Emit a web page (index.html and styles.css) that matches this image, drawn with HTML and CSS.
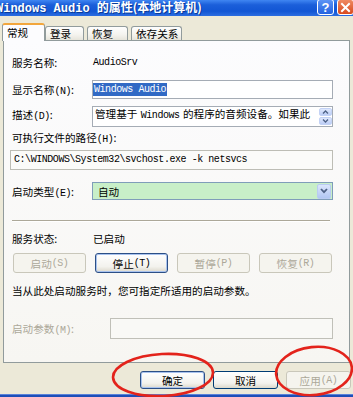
FILE: index.html
```html
<!DOCTYPE html>
<html>
<head>
<meta charset="utf-8">
<link rel="stylesheet" href="styles.css">
</head>
<body>
<div class="win">
  <div class="titlebar">
    <span class="title"><span class="tm">Windows Audio </span>的属性(本地计算机)</span>
    <div class="tbtns">
      <span class="tb help">?</span>
      <span class="tb close"><svg width="11" height="11" viewBox="0 0 11 11"><path d="M2 2 L9 9 M9 2 L2 9" stroke="#fff" stroke-width="2" stroke-linecap="square"/></svg></span>
    </div>
  </div>
  <div class="tabs">
    <div class="tab active">常规</div>
    <div class="tab t2">登录</div>
    <div class="tab t3">恢复</div>
    <div class="tab t4">依存关系</div>
  </div>
  <div class="panel">
    <div class="row r1"><span class="lbl">服务名称:</span><span class="val m">AudioSrv</span></div>
    <div class="row r2"><span class="lbl">显示名称<span class="m">(N)</span>:</span><div class="input"><span class="sel m">Windows Audio</span></div></div>
    <div class="row r3"><span class="lbl">描述<span class="m">(D)</span>:</span><div class="textarea"><span class="ta-text">管理基于 <span class="m">Windows</span> 的程序的音频设备。如果此</span><div class="vscroll"><span class="sb"><svg width="7" height="4" viewBox="0 0 7 4"><path d="M1 3.5 L3.5 1 L6 3.5" fill="none" stroke="#4d6185" stroke-width="1.3"/></svg></span><span class="sb"><svg width="7" height="4" viewBox="0 0 7 4"><path d="M1 0.5 L3.5 3 L6 0.5" fill="none" stroke="#4d6185" stroke-width="1.3"/></svg></span></div></div></div>
    <div class="r4">可执行文件的路径<span class="m">(H)</span>:</div>
    <div class="path m">C:\WINDOWS\System32\svchost.exe -k netsvcs</div>
    <div class="row r5"><span class="lbl">启动类型<span class="m">(E)</span>:</span><div class="select"><span class="selv">自动</span><span class="arrow"><svg width="8" height="6" viewBox="0 0 8 6"><path d="M1 1 L4 4.2 L7 1" fill="none" stroke="#4d6185" stroke-width="1.8"/></svg></span></div></div>
    <div class="sep"></div>
    <div class="row r6"><span class="lbl">服务状态:</span><span class="val">已启动</span></div>
    <div class="btnrow">
      <span class="btn dis">启动<span class="m">(S)</span></span>
      <span class="btn focus">停止<span class="m">(T)</span></span>
      <span class="btn dis">暂停<span class="m">(P)</span></span>
      <span class="btn dis">恢复<span class="m">(R)</span></span>
    </div>
    <div class="note">当从此处启动服务时，您可指定所适用的启动参数。</div>
    <div class="row r7"><span class="lbl7 dtext">启动参数<span class="m">(M)</span>:</span><div class="input param"></div></div>
  </div>
  <div class="footer">
    <span class="btn fbtn focus">确定</span>
    <span class="btn fbtn">取消</span>
    <span class="btn fbtn dis">应用<span class="m">(A)</span></span>
  </div>
  <div class="strip"></div>
  <svg class="marks" width="353" height="397" viewBox="0 0 353 397">
    <ellipse cx="163" cy="375" rx="50" ry="21" transform="rotate(-3 163 375)" fill="none" stroke="#e3231b" stroke-width="2.6"/>
    <ellipse cx="314" cy="371" rx="38" ry="24" transform="rotate(-6 314 371)" fill="none" stroke="#e3231b" stroke-width="2.6"/>
  </svg>
</div>
</body>
</html>
```

FILE: styles.css
```css
* { box-sizing: border-box; }
html, body { margin: 0; padding: 0; }
body {
  width: 353px;
  height: 397px;
  overflow: hidden;
  background: #ece9d8;
  font-family: "Noto Sans CJK SC", "Noto Sans", sans-serif;
  font-size: 10.6px;
  color: #000;
}
.win { position: relative; width: 353px; height: 397px; overflow: hidden; }

.m {
  font-family: "Liberation Mono", "Noto Sans CJK SC", monospace;
  font-size: 10px;
  letter-spacing: -0.45px;
}

.titlebar {
  height: 16px;
  display: flex;
  justify-content: space-between;
  align-items: center;
  background: linear-gradient(#3f86f2, #1b5fda 30%, #1256d4 70%, #2b6de0);
  color: #fff;
}
.title {
  margin-left: -4px;
  font-weight: bold;
  font-size: 12px;
  line-height: 16px;
  white-space: nowrap;
  text-shadow: 1px 1px 0 #0a3c9a;
}
.tm {
  font-family: "Liberation Mono", monospace;
  font-size: 12px;
  letter-spacing: 0;
}
.tbtns { display: flex; gap: 3px; margin-right: -1px; align-self: flex-start; }
.tb {
  width: 17px;
  height: 16px;
  margin-top: -1px;
  border: 1px solid #fff;
  border-radius: 3px;
  display: flex;
  align-items: center;
  justify-content: center;
  color: #fff;
  font-family: "Liberation Sans", sans-serif;
  font-weight: bold;
  font-size: 13px;
}
.help { background: linear-gradient(#5c93f4, #2463e0); }
.close { background: linear-gradient(#ef8a62, #d84a1e); }

.tabs {
  height: 24px;
  display: flex;
  align-items: flex-end;
  padding-left: 2px;
  position: relative;
  z-index: 2;
}
.tab {
  height: 14px;
  border: 1px solid #919b9c;
  border-bottom: none;
  border-radius: 3px 3px 0 0;
  background: linear-gradient(#fefefe, #f4f3ee 60%, #e6e4da);
  padding-left: 4px;
  line-height: 13px;
}
.tab.active {
  width: 43px;
  height: 18px;
  margin-bottom: -1px;
  background: #fcfcfe;
  border-top: 2px solid #f2a63c;
  padding-left: 4px;
  padding-top: 1px;
  line-height: 14px;
}
.t2 { width: 39px; }
.t3 { width: 41px; margin-left: 3px; }
.t4 { width: 51px; margin-left: 3px; }

.panel {
  margin: 0 3px 0 3px;
  height: 323px;
  border: 1px solid #919b9c;
  background: linear-gradient(#fcfcfe, #f7f6f2);
  padding: 13px 16px 0 8px;
}
.row { display: flex; align-items: center; }
.lbl { width: 80px; flex: none; white-space: nowrap; }
.val { padding-left: 1px; }
.r1 { height: 16px; }
.r2 { height: 19px; margin-top: 10px; }
.r3 { height: 21px; margin-top: 7px; align-items: flex-start; }
.r3 .lbl { line-height: 18px; }
.input {
  flex: 1;
  height: 19px;
  border: 1px solid #a5acb5;
  background: #fff;
  display: flex;
  align-items: center;
}
.sel {
  background: #316ac5;
  color: #fff;
  line-height: 13px;
  padding: 0 1px;
}
.textarea {
  flex: 1;
  height: 21px;
  border: 1px solid #a5acb5;
  background: #fff;
  display: flex;
  justify-content: space-between;
  padding-left: 2px;
  line-height: 14px;
  white-space: nowrap;
  overflow: hidden;
}
.ta-text { word-spacing: 1px; }
.vscroll {
  width: 13px;
  display: flex;
  flex-direction: column;
  gap: 1px;
  padding: 1px 0;
}
.sb {
  height: 9px;
  background: linear-gradient(#dfe8fd, #bccdf5);
  border: 1px solid #c3d2f5;
  border-radius: 2px;
  display: flex;
  align-items: center;
  justify-content: center;
}
.r4 { height: 14px; line-height: 14px; margin-top: 4px; }
.path {
  height: 20px;
  margin-top: 5px;
  margin-left: -2px;
  border: 1px solid #bdbdb5;
  background: #fbfbf9;
  padding-left: 3px;
  line-height: 18px;
  white-space: nowrap;
}
.r5 { height: 18px; margin-top: 12px; }
.select {
  flex: 1;
  height: 18px;
  border: 1px solid #7f9db9;
  background: #c8efc8;
  display: flex;
  justify-content: space-between;
  align-items: center;
  padding: 1px 1px 1px 5px;
}
.arrow {
  width: 14px;
  height: 15px;
  border: 1px solid #b9ccf2;
  border-radius: 2px;
  background: linear-gradient(#dbe6fd, #b1c7f3);
  display: flex;
  align-items: center;
  justify-content: center;
}
.sep {
  margin-top: 20px;
  margin-right: 3px;
  height: 2px;
  border-top: 1px solid #aca899;
  border-bottom: 1px solid #fff;
}
.r6 { height: 16px; margin-top: 8px; }
.btnrow {
  margin-top: 7px;
  height: 20px;
  display: flex;
  gap: 9px;
  padding-left: 1px;
}
.btn {
  width: 73px;
  height: 20px;
  border: 1px solid #003c74;
  border-radius: 3px;
  background: linear-gradient(#ffffff, #f3f2ed 70%, #dcd8cb);
  display: flex;
  align-items: center;
  justify-content: center;
  white-space: nowrap;
}
.btn.dis {
  border-color: #c9c7ba;
  color: #aca899;
  background: #f5f4ee;
}
.btn.focus {
  border-color: #2c4f86;
  box-shadow: inset 0 0 0 1px #a9c3ee;
}
.note { margin-top: 10px; height: 16px; line-height: 16px; white-space: nowrap; }
.r7 { height: 21px; margin-top: 19px; }
.lbl7 { width: 98px; flex: none; white-space: nowrap; }
.dtext { color: #aca899; }
.input.param { height: 21px; border-color: #c0c0b8; background: #f9f9f6; }

.footer {
  height: 31px;
  display: flex;
  justify-content: flex-end;
  align-items: flex-start;
  gap: 8px;
  padding-top: 8px;
  padding-right: 2px;
}
.fbtn { width: 65px; height: 18px; }
.strip {
  height: 3px;
  background: #1d4fb8;
  border-top: 1px solid #5a82d8;
}
.marks { position: absolute; left: 0; top: 0; pointer-events: none; }
```
